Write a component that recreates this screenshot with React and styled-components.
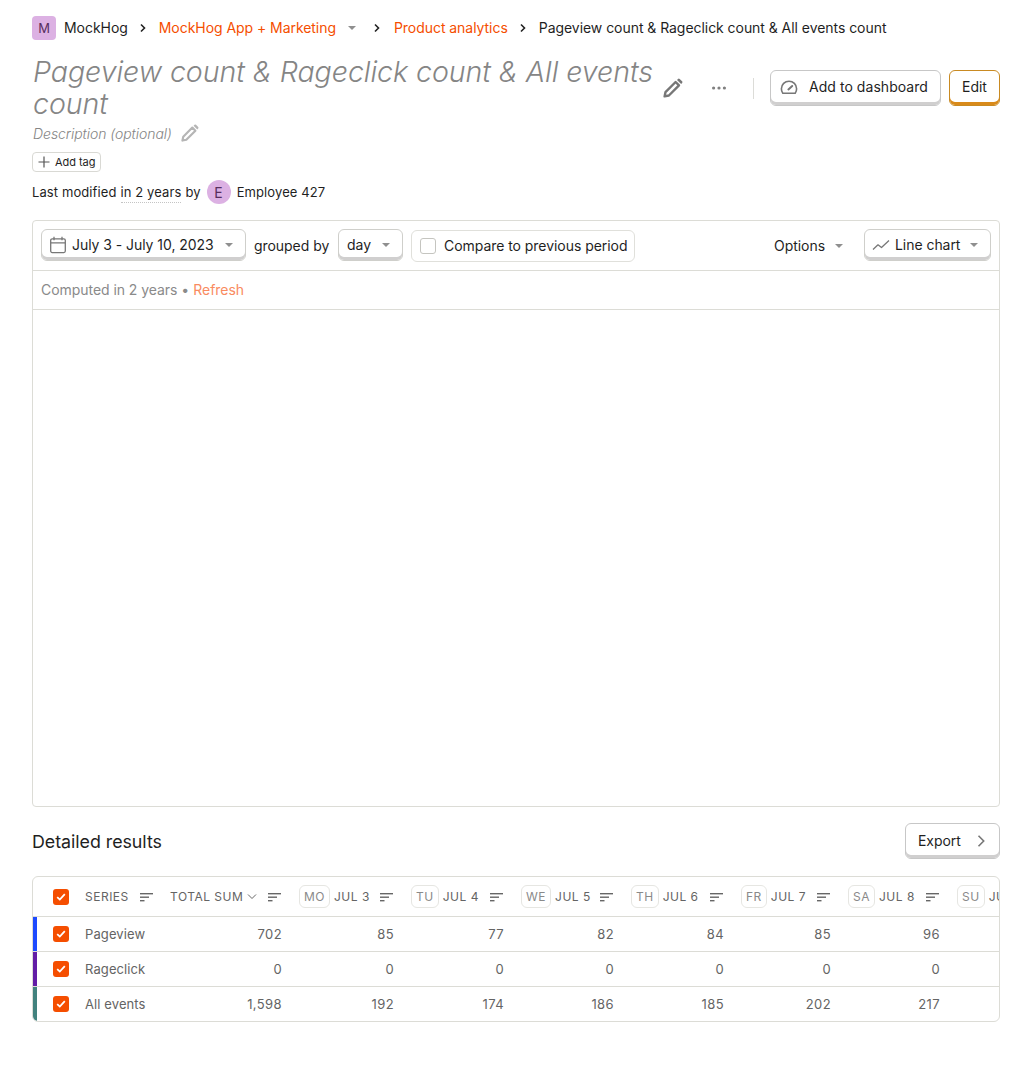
import React from 'react';
import styled, { createGlobalStyle } from 'styled-components';

const days = [
  { tag: 'MO', date: 'JUL 3', width: 112, values: ['85', '0', '192'] },
  { tag: 'TU', date: 'JUL 4', width: 110, values: ['77', '0', '174'] },
  { tag: 'WE', date: 'JUL 5', width: 110, values: ['82', '0', '186'] },
  { tag: 'TH', date: 'JUL 6', width: 110, values: ['84', '0', '185'] },
  { tag: 'FR', date: 'JUL 7', width: 107, values: ['85', '0', '202'] },
  { tag: 'SA', date: 'JUL 8', width: 109, values: ['96', '0', '217'] },
  { tag: 'SU', date: 'JUL 9', width: 110, values: ['', '', ''] },
];

const series = [
  { name: 'Pageview', color: '#1d4aff', total: '702' },
  { name: 'Rageclick', color: '#621da6', total: '0' },
  { name: 'All events', color: '#42827e', total: '1,598' },
];

const PencilIcon = ({ size = 20, color = '#777' }) => (
  <svg width={size} height={size} viewBox="2 2 20 20" fill="none">
    <path
      d="M3.6 20.4l.9-4.3L14.6 6l3.4 3.4L7.9 19.5z"
      stroke={color}
      strokeWidth="2.4"
      strokeLinejoin="round"
    />
    <path d="M16 3.9l1-1a1.2 1.2 0 0 1 1.7 0l2.4 2.4a1.2 1.2 0 0 1 0 1.7l-1 1z" fill={color} />
  </svg>
);

const DotsIcon = () => (
  <svg width="20" height="20" viewBox="0 0 20 20" fill="#808080">
    <circle cx="4.6" cy="10" r="1.6" />
    <circle cx="10" cy="10" r="1.6" />
    <circle cx="15.4" cy="10" r="1.6" />
  </svg>
);

const GaugeIcon = () => (
  <svg width="20" height="20" viewBox="0 0 20 20" fill="none" stroke="#777" strokeWidth="1.6">
    <path d="M3.8 16.2h12.4c.8-1 1.4-2.6 1.4-4.4A7.6 7.6 0 0 0 10 4.2a7.6 7.6 0 0 0-7.6 7.6c0 1.8.6 3.4 1.4 4.4z" strokeLinejoin="round" />
    <path d="M9.4 12.4l3.8-3.4" strokeLinecap="round" strokeWidth="2" />
  </svg>
);

const CalendarIcon = () => (
  <svg width="18" height="18" viewBox="0 0 18 18" fill="none" stroke="#777" strokeWidth="1.3">
    <rect x="1.7" y="2.8" width="14.6" height="13.8" rx="1.5" />
    <path d="M1.7 6.8h14.6M5 .8v3.4M13 .8v3.4" />
  </svg>
);

const LineChartIcon = () => (
  <svg width="18" height="18" viewBox="0 0 18 18" fill="none" stroke="#777" strokeWidth="1.3">
    <path d="M1 13.5l5-4.7 3.5 2.7L17 4.5" strokeLinejoin="round" />
  </svg>
);

const SortIcon = () => (
  <SortWrap>
    <svg width="14" height="10" viewBox="0 0 14 10" fill="#666">
      <rect x="0" y="1" width="13" height="1.4" />
      <rect x="0" y="4.5" width="9" height="1.4" />
      <rect x="0" y="8" width="4.5" height="1.4" />
    </svg>
  </SortWrap>
);

const Check = () => (
  <CheckBox>
    <svg width="10" height="8" viewBox="0 0 10 8" fill="none" stroke="#fff" strokeWidth="1.8">
      <path d="M1.2 4.2l2.6 2.4 5-5.4" />
    </svg>
  </CheckBox>
);

const Chevron = () => (
  <svg width="10" height="10" viewBox="0 0 10 10" fill="none" stroke="#222" strokeWidth="1.6">
    <path d="M3 1.5L6.5 5 3 8.5" />
  </svg>
);

export default function App() {
  return (
    <>
      <GlobalStyle />
      <Page>
        <Breadcrumbs>
          <ProjectBadge>M</ProjectBadge>
          <Crumb>MockHog</Crumb>
          <CrumbSep><Chevron /></CrumbSep>
          <Crumb $link>MockHog App + Marketing</Crumb>
          <CrumbCaret><Caret /></CrumbCaret>
          <CrumbSep $tight><Chevron /></CrumbSep>
          <Crumb $link>Product analytics</Crumb>
          <CrumbSep><Chevron /></CrumbSep>
          <Crumb>Pageview count &amp; Rageclick count &amp; All events count</Crumb>
        </Breadcrumbs>

        <TitleRow>
          <Title>Pageview count &amp; Rageclick count &amp; All events count</Title>
          <IconSlot><PencilIcon /></IconSlot>
          <MoreSlot><DotsIcon /></MoreSlot>
          <Divider />
          <ActionButton $width={171}>
            <GaugeIcon />
            <span>Add to dashboard</span>
          </ActionButton>
          <EditButton>Edit</EditButton>
        </TitleRow>

        <DescriptionRow>
          <Description>Description (optional)</Description>
          <PencilIcon size={18} color="#b5b5b5" />
        </DescriptionRow>

        <AddTag>
          <svg width="12" height="12" viewBox="0 0 12 12" stroke="#555" strokeWidth="1.2">
            <path d="M6 .5v11M.5 6h11" />
          </svg>
          Add tag
        </AddTag>

        <ModifiedRow>
          <span>Last modified</span>
          <Dotted>in 2 years</Dotted>
          <span>by</span>
          <UserBadge>E</UserBadge>
          <span>Employee 427</span>
        </ModifiedRow>

        <InsightCard>
          <Controls>
            <SelectButton $width={205}>
              <CalendarIcon />
              <SelectLabel>July 3 - July 10, 2023</SelectLabel>
              <Caret />
            </SelectButton>
            <GroupLabel>grouped by</GroupLabel>
            <SelectButton $width={65}>
              <SelectLabel>day</SelectLabel>
              <Caret />
            </SelectButton>
            <CompareBox>
              <EmptyCheck />
              <span>Compare to previous period</span>
            </CompareBox>
            <Options>
              <span>Options</span>
              <Caret />
            </Options>
            <SelectButton $width={127}>
              <LineChartIcon />
              <SelectLabel>Line chart</SelectLabel>
              <Caret />
            </SelectButton>
          </Controls>
          <ComputedRow>
            Computed in 2 years • <Refresh>Refresh</Refresh>
          </ComputedRow>
          <ChartArea />
        </InsightCard>

        <ResultsHeader>
          <ResultsTitle>Detailed results</ResultsTitle>
          <ExportButton>
            <span>Export</span>
            <svg width="16" height="16" viewBox="0 0 16 16" fill="none" stroke="#777" strokeWidth="1.6">
              <path d="M5.5 2.8L10.7 8l-5.2 5.2" />
            </svg>
          </ExportButton>
        </ResultsHeader>

        <TableWrap>
          <Table>
            <colgroup>
              <col width="44" />
              <col width="85" />
              <col width="128" />
              {days.map((d) => (
                <col key={d.tag} width={d.width} />
              ))}
            </colgroup>
            <thead>
              <tr>
                <CheckHead><Check /></CheckHead>
                <HeadCell>
                  <HeadInner>SERIES <SortIcon /></HeadInner>
                </HeadCell>
                <HeadCell>
                  <HeadInner>
                    <span>TOTAL SUM</span>
                    <svg width="10" height="8" viewBox="0 0 10 8" fill="none" stroke="#666" strokeWidth="1">
                      <path d="M1 1.5l4 4 4-4" />
                    </svg>
                    <SortIcon />
                  </HeadInner>
                </HeadCell>
                {days.map((d) => (
                  <HeadCell key={d.tag}>
                    <HeadInner>
                      <DayTag>{d.tag}</DayTag>
                      <span>{d.date}</span>
                      <SortIcon />
                    </HeadInner>
                  </HeadCell>
                ))}
              </tr>
            </thead>
            <tbody>
              {series.map((s, i) => (
                <tr key={s.name}>
                  <CheckCell $color={s.color}><Check /></CheckCell>
                  <BodyCell>{s.name}</BodyCell>
                  <NumCell>{s.total}</NumCell>
                  {days.map((d) => (
                    <NumCell key={d.tag}>{d.values[i]}</NumCell>
                  ))}
                </tr>
              ))}
            </tbody>
          </Table>
        </TableWrap>
      </Page>
    </>
  );
}

const GlobalStyle = createGlobalStyle`
  * {
    box-sizing: border-box;
  }
  body {
    margin: 0;
    background: #ffffff;
    color: #1f1f1f;
    font-family: Inter, 'Liberation Sans', sans-serif;
    font-size: 14px;
    letter-spacing: -0.05px;
  }
`;

const Page = styled.div`
  width: 1032px;
  height: 1087px;
  padding: 16px 32px 0;
  overflow: hidden;
`;

const Breadcrumbs = styled.div`
  display: flex;
  align-items: center;
  height: 24px;
`;

const ProjectBadge = styled.div`
  width: 24px;
  height: 24px;
  border-radius: 4px;
  background: #dcb1e3;
  color: #572e5e;
  display: flex;
  align-items: center;
  justify-content: center;
  font-size: 13px;
  margin-right: 8px;
`;

const Crumb = styled.span`
  color: ${(props) => (props.$link ? '#f54e00' : '#1f1f1f')};
  white-space: nowrap;
  padding-bottom: 1px;
`;

const CrumbSep = styled.span`
  width: ${(props) => (props.$tight ? '14px' : '31px')};
  display: flex;
  justify-content: center;
  margin-right: ${(props) => (props.$tight ? '10px' : '0')};
`;

const CrumbCaret = styled.span`
  display: flex;
  margin: 0 14px 0 12px;
`;

const Caret = styled.span`
  display: inline-block;
  width: 0;
  height: 0;
  border-left: 4.5px solid transparent;
  border-right: 4.5px solid transparent;
  border-top: 4.5px solid #8f8f8f;
  flex: none;
`;

const TitleRow = styled.div`
  display: flex;
  align-items: center;
  margin-top: 16px;
`;

const Title = styled.div`
  width: 631px;
  padding-left: 1px;
  font-size: 28.55px;
  line-height: 32px;
  font-style: italic;
  font-weight: 300;
  color: #858585;
`;

const IconSlot = styled.div`
  width: 20px;
  height: 20px;
  display: flex;
`;

const MoreSlot = styled.div`
  width: 20px;
  height: 20px;
  margin-left: 26px;
  display: flex;
`;

const Divider = styled.div`
  width: 1px;
  height: 21px;
  background: #dcdcd8;
  margin: 0 16px 0 24px;
`;

const ActionButton = styled.div`
  width: ${(props) => props.$width}px;
  height: 36px;
  display: flex;
  align-items: center;
  gap: 10px;
  padding: 0 12px 3px 8px;
  background: #fff;
  border: 1px solid #c7c7c7;
  border-radius: 6px;
  box-shadow: inset 0 -3px 0 #d0cfcf;
  white-space: nowrap;
  letter-spacing: 0.05px;
`;

const EditButton = styled.div`
  width: 51px;
  height: 36px;
  margin-left: 8px;
  display: flex;
  align-items: center;
  justify-content: center;
  padding-bottom: 3px;
  border: 1px solid #c98a22;
  border-radius: 6px;
  box-shadow: inset 0 -3px 0 #d98a1a;
`;

const DescriptionRow = styled.div`
  display: flex;
  align-items: center;
  gap: 9px;
  height: 20px;
  margin-top: 3px;
  padding-left: 1px;
`;

const Description = styled.span`
  font-style: italic;
  font-weight: 300;
  color: #858585;
  font-size: 14px;
`;

const AddTag = styled.div`
  display: flex;
  align-items: center;
  gap: 5px;
  height: 20px;
  width: 69px;
  margin-top: 9px;
  padding-left: 5px;
  border: 1px solid #d9d9d4;
  border-radius: 4px;
  font-size: 11px;
  color: #1f1f1f;
`;

const ModifiedRow = styled.div`
  display: flex;
  align-items: center;
  gap: 4px;
  height: 24px;
  margin-top: 8px;
  font-size: 13px;
  letter-spacing: 0.1px;
`;

const Dotted = styled.span`
  padding: 3px 0 2px;
  line-height: 16px;
  border-bottom: 1px dotted #c4c4c4;
`;

const UserBadge = styled.div`
  width: 24px;
  height: 24px;
  margin: 0 2px 0 2px;
  border-radius: 50%;
  background: #dcb1e3;
  color: #572e5e;
  display: flex;
  align-items: center;
  justify-content: center;
  font-size: 14px;
`;

const InsightCard = styled.div`
  margin-top: 16px;
  height: 587px;
  border: 1px solid #dcdcd6;
  border-radius: 4px;
  display: flex;
  flex-direction: column;
`;

const Controls = styled.div`
  display: flex;
  align-items: flex-start;
  height: 50px;
  padding: 8px;
  border-bottom: 1px solid #dcdcd6;
`;

const SelectButton = styled.div`
  width: ${(props) => props.$width}px;
  height: 32px;
  flex: none;
  display: flex;
  align-items: center;
  padding: 0 12px 1px 8px;
  border: 1px solid #cfcfcb;
  border-radius: 6px;
  box-shadow: inset 0 -3px 0 #d0cfcf;
  white-space: nowrap;

  svg {
    margin-left: -1px;
    margin-right: 5px;
  }
`;

const SelectLabel = styled.span`
  margin-right: auto;
`;

const GroupLabel = styled.span`
  width: 92px;
  padding-left: 8px;
  line-height: 32px;
  padding-top: 1px;
  flex: none;
`;

const CompareBox = styled.div`
  width: 224px;
  height: 32px;
  margin-left: 8px;
  margin-top: 1px;
  display: flex;
  align-items: center;
  gap: 8px;
  padding: 0 0 1px 8px;
  border: 1px solid #e0e0db;
  border-radius: 6px;
  white-space: nowrap;
`;

const EmptyCheck = styled.span`
  width: 16px;
  height: 16px;
  margin-top: 1px;
  border: 1px solid #c5c5c0;
  border-radius: 3px;
`;

const Options = styled.div`
  margin-left: auto;
  margin-right: 21px;
  display: flex;
  align-items: center;
  gap: 10px;
  height: 32px;
  padding-top: 1px;
`;

const ComputedRow = styled.div`
  height: 39px;
  padding: 0 0 2px 8px;
  display: flex;
  align-items: center;
  gap: 0.3em;
  color: #8a8a8a;
  border-bottom: 1px solid #dcdcd6;
`;

const Refresh = styled.span`
  color: #f98b5f;
`;

const ChartArea = styled.div`
  flex: 1;
`;

const ResultsHeader = styled.div`
  display: flex;
  align-items: center;
  justify-content: space-between;
  height: 36px;
  margin-top: 16px;
`;

const ResultsTitle = styled.div`
  font-size: 17.85px;
  padding-top: 1px;
`;

const ExportButton = styled.div`
  width: 95px;
  height: 36px;
  display: flex;
  align-items: center;
  justify-content: space-between;
  padding: 0 10px 1px 12px;
  border: 1px solid #c7c7c7;
  border-radius: 6px;
  box-shadow: inset 0 -3px 0 #d0cfcf;
`;

const TableWrap = styled.div`
  margin-top: 17px;
  height: 146px;
  border: 1px solid #dcdcd6;
  border-radius: 6px;
  overflow: hidden;
`;

const Table = styled.table`
  table-layout: fixed;
  width: 1025px;
  border-collapse: separate;
  border-spacing: 0;
  font-size: 13px;
  color: #646464;
`;

const HeadCell = styled.th`
  height: 40px;
  padding: 0 8px;
  font-weight: 400;
  font-size: 12px;
  letter-spacing: 0.5px;
  text-align: left;
  border-bottom: 1px solid #dcdcd6;
  white-space: nowrap;
  overflow: hidden;
`;

const CheckHead = styled(HeadCell)`
  padding: 0;
`;

const HeadInner = styled.div`
  display: flex;
  align-items: center;
  gap: 4px;
`;

const SortWrap = styled.span`
  display: flex;
  flex: none;
  margin-left: auto;
`;

const DayTag = styled.span`
  height: 23px;
  margin-left: 1px;
  padding: 0 4px;
  display: inline-flex;
  align-items: center;
  border: 1px solid #e6e6e2;
  border-radius: 6px;
  color: #8a8a8a;
`;

const BodyCell = styled.td`
  height: 35px;
  padding: 0 8px;
  letter-spacing: 0.1px;
  border-bottom: 1px solid #dcdcd6;

  tr:last-child > & {
    border-bottom-color: transparent;
  }
`;

const NumCell = styled(BodyCell)`
  text-align: right;
  letter-spacing: 0.4px;
`;

const CheckCell = styled(BodyCell)`
  padding: 0;
  box-shadow: inset 4px 0 0 ${(props) => props.$color};
`;

const CheckBox = styled.span`
  width: 16px;
  height: 16px;
  margin-left: 20px;
  border-radius: 3px;
  background: #f54e00;
  display: flex;
  align-items: center;
  justify-content: center;
`;
